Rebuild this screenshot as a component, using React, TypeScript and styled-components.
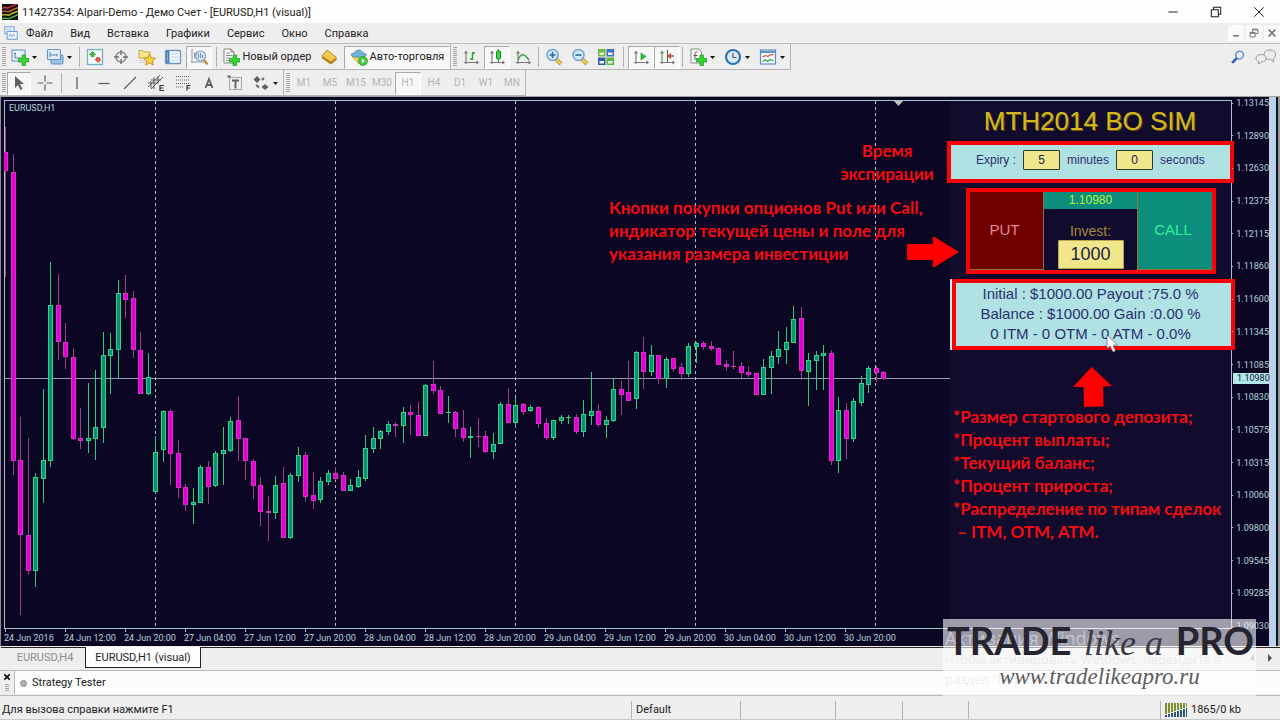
import React from "react";
import styled, { createGlobalStyle, css } from "styled-components";

const ui = `Roboto, "Open Sans", sans-serif`;
const arial = `"Liberation Sans", Arial, sans-serif`;

const Global = createGlobalStyle`
  * { box-sizing: border-box; }
  body { margin: 0; background: #eeeeee; }
  button, input { font: inherit; margin: 0; padding: 0; border: 0; border-radius: 0; background: none; color: inherit; }
  svg { display: block; flex: none; }
`;

/* ---------- data ---------- */

// kind, wick top, wick bottom, body top, body bottom
type Candle = ["u" | "d", number, number, number, number];

const candles: Candle[] = [
  ["d", 27, 177, 52, 71], ["d", 54, 375, 72, 361], ["d", 317, 515, 360, 435], ["d", 338, 474, 435, 471],
  ["u", 373, 487, 377, 471], ["u", 289, 403, 360, 379], ["u", 162, 367, 205, 361], ["d", 174, 260, 205, 242],
  ["d", 223, 269, 242, 257], ["d", 248, 340, 257, 339], ["d", 308, 349, 338, 341], ["u", 283, 353, 338, 341],
  ["u", 270, 360, 327, 339], ["u", 232, 343, 255, 328], ["u", 233, 294, 249, 256], ["u", 180, 278, 193, 250],
  ["d", 175, 218, 193, 200], ["d", 191, 258, 198, 250], ["d", 232, 294, 250, 294], ["u", 253, 295, 277, 294],
  ["u", 336, 393, 352, 392], ["u", 310, 362, 311, 350], ["d", 309, 385, 311, 354], ["d", 340, 398, 353, 388],
  ["d", 384, 411, 387, 405], ["u", 388, 424, 402, 405], ["u", 365, 403, 367, 403], ["d", 361, 404, 367, 387],
  ["u", 351, 387, 353, 386], ["u", 327, 385, 350, 354], ["u", 317, 352, 321, 351], ["d", 296, 361, 320, 339],
  ["d", 338, 380, 338, 361], ["d", 359, 399, 361, 386], ["d", 377, 426, 385, 412], ["d", 396, 441, 411, 413],
  ["u", 376, 419, 385, 413], ["d", 367, 438, 383, 438], ["u", 373, 439, 375, 438], ["u", 347, 382, 355, 376],
  ["d", 352, 402, 355, 397], ["d", 372, 409, 395, 401], ["u", 377, 403, 381, 400], ["u", 370, 385, 373, 382],
  ["d", 367, 380, 373, 379], ["d", 372, 391, 375, 391], ["u", 379, 391, 385, 391], ["u", 370, 388, 377, 387],
  ["u", 335, 381, 348, 379], ["u", 327, 353, 338, 349], ["u", 330, 349, 331, 339], ["u", 321, 335, 324, 332],
  ["d", 322, 337, 324, 326], ["u", 307, 343, 312, 326], ["d", 305, 335, 312, 315], ["d", 302, 336, 315, 336],
  ["u", 284, 336, 285, 336], ["d", 261, 294, 284, 291], ["d", 286, 314, 290, 314], ["u", 296, 323, 312, 313],
  ["d", 311, 337, 312, 329], ["d", 310, 342, 328, 338], ["u", 327, 358, 336, 338], ["d", 318, 347, 336, 337],
  ["d", 331, 353, 336, 352], ["u", 333, 359, 344, 352], ["u", 302, 344, 304, 344], ["d", 288, 323, 304, 323],
  ["u", 298, 328, 305, 323], ["d", 303, 315, 304, 312], ["u", 305, 312, 307, 311], ["d", 306, 328, 307, 324],
  ["d", 318, 340, 323, 338], ["u", 320, 340, 320, 338], ["u", 315, 324, 317, 321], ["u", 315, 324, 317, 318],
  ["d", 314, 334, 317, 332], ["u", 300, 337, 314, 332], ["u", 272, 325, 311, 316], ["d", 304, 327, 311, 325],
  ["u", 316, 338, 320, 325], ["u", 279, 322, 289, 321], ["d", 281, 315, 289, 295], ["d", 261, 301, 292, 301],
  ["u", 251, 309, 252, 299], ["d", 237, 289, 252, 272], ["u", 245, 276, 255, 272], ["d", 255, 284, 255, 279],
  ["u", 257, 288, 259, 279], ["d", 258, 272, 258, 269], ["d", 263, 280, 267, 274], ["u", 243, 277, 246, 274],
  ["u", 242, 263, 243, 247], ["d", 241, 250, 243, 247], ["d", 241, 251, 246, 249], ["d", 247, 265, 248, 265],
  ["d", 260, 271, 264, 267], ["d", 251, 269, 266, 267], ["d", 262, 278, 266, 273], ["d", 266, 277, 272, 275],
  ["d", 273, 295, 273, 295], ["u", 259, 295, 267, 295], ["u", 251, 294, 256, 268], ["u", 231, 264, 249, 257],
  ["u", 227, 264, 242, 250], ["u", 206, 243, 219, 243], ["d", 207, 278, 218, 271], ["u", 253, 306, 260, 272],
  ["u", 251, 290, 255, 261], ["u", 245, 290, 253, 256], ["d", 250, 365, 253, 361], ["u", 297, 373, 310, 361],
  ["d", 303, 359, 310, 339], ["u", 298, 342, 301, 339], ["u", 276, 306, 283, 303], ["u", 266, 293, 268, 285],
  ["d", 266, 282, 268, 273], ["d", 271, 280, 272, 279],
];

const prices = [
  "1.13145", "1.12890", "1.12630", "1.12375", "1.12115", "1.11860", "1.11600", "1.11345", "1.11085",
  "1.10830", "1.10575", "1.10315", "1.10060", "1.09800", "1.09545", "1.09285", "1.09030",
];

const times = [
  "24 Jun 2016", "24 Jun 12:00", "24 Jun 20:00", "27 Jun 04:00", "27 Jun 12:00", "27 Jun 20:00",
  "28 Jun 04:00", "28 Jun 12:00", "28 Jun 20:00", "29 Jun 04:00", "29 Jun 12:00", "29 Jun 20:00",
  "30 Jun 04:00", "30 Jun 12:00", "30 Jun 20:00",
];

const menus = ["Файл", "Вид", "Вставка", "Графики", "Сервис", "Окно", "Справка"];
const frames = ["M1", "M5", "M15", "M30", "H1", "H4", "D1", "W1", "MN"];

/* ---------- window chrome ---------- */

const Page = styled.div`
  position: relative;
  display: flex;
  flex-direction: column;
  min-height: 100vh;
  overflow: hidden;
  background: #eeeeee;
  color: #222;
  font: 11px/16px ${ui};
`;

const TitleBar = styled.header`
  display: flex;
  align-items: center;
  height: 23px;
  padding-left: 2px;
  background: #fdfdfb;
`;

const Title = styled.h1`
  flex: 1;
  margin: 0 0 0 4px;
  font: inherit;
  line-height: 18px;
  padding-top: 2px;
`;

const WindowButton = styled.button`
  display: flex;
  align-items: center;
  justify-content: center;
  width: 43px;
  height: 22px;
`;

const MenuBar = styled.nav`
  display: flex;
  align-items: center;
  height: 21px;
  padding-left: 4px;
  border-bottom: 1px solid #bcbcbc;
`;

const MenuItems = styled.div`
  display: flex;
  flex: 1;
  gap: 17px;
  padding-top: 1px;
  margin-left: 8px;
`;

const MdiButtons = styled.div`
  display: flex;
  gap: 2px;
`;

const MdiButton = styled.button`
  display: flex;
  align-items: center;
  justify-content: center;
  width: 16px;
  height: 16px;
  background: #fafafa;
`;

const ToolRow = styled.div<{ $last?: boolean }>`
  display: flex;
  align-items: center;
  height: ${(p) => (p.$last ? 27 : 26)}px;
  ${(p) => p.$last && css`border-bottom: 1px solid #a0a0a0;`}
`;

const ToolGroup = styled.div`
  display: flex;
  align-items: center;
  height: 26px;
  padding: 1px 0 0 2px;
  border: solid #b4b4b4;
  border-width: 0 1px 1px 0;
`;

const Spacer = styled.div`
  flex: 1;
`;

const Grip = styled.span`
  width: 4px;
  height: 20px;
  margin-right: 1px;
  background: repeating-linear-gradient(#a5a5a5 0 1px, #eee 1px 2px);
`;

const Sep = styled.span<{ $loose?: boolean }>`
  width: 1px;
  height: 20px;
  margin: 0 ${(p) => (p.$loose ? 4 : 2)}px;
  background: #b0b0b0;
`;

const ToolButton = styled.button<{ $pressed?: boolean; $wide?: number; $muted?: boolean }>`
  display: flex;
  align-items: center;
  justify-content: center;
  gap: 2px;
  width: ${(p) => p.$wide ?? 26}px;
  height: 23px;
  white-space: nowrap;
  ${(p) => p.$muted && css`color: #b4b4b4; font-size: 10px;`}
  ${(p) =>
    p.$pressed &&
    css`
      background: #f7f7f7;
      border: 1px solid #a8a8a8;
      border-right-color: #fff;
      border-bottom-color: #fff;
    `}
`;

const CornerTools = styled.div`
  display: flex;
  align-items: center;
  gap: 10px;
  padding-right: 4px;
`;

/* ---------- chart ---------- */

const Workspace = styled.main`
  position: relative;
  display: grid;
  flex: 1;
  grid-template-columns: minmax(0, 1fr) 37px 11px;
  grid-template-rows: 3px minmax(529px, 1fr) 17px;
  padding-left: 3px;
  background: #0a0624;
  border-left: 1px solid #8c8c90;
  color: #b4d4dc;
  font: 9px/12px ${ui};
`;

const Plot = styled.section`
  position: relative;
  display: flex;
  justify-content: flex-end;
  grid-area: 2 / 1;
  border: 1px solid #a9c0cc;
`;

const ChartCanvas = styled.svg`
  position: absolute;
  top: -1px;
  left: -1px;
  width: 100%;
  height: 100%;
`;

const Symbol = styled.span`
  position: absolute;
  top: 1px;
  left: 4px;
`;

const PriceAxis = styled.div`
  position: relative;
  display: flex;
  flex-direction: column;
  justify-content: space-between;
  grid-area: 1 / 2 / 4 / 3;
  padding-bottom: 14px;
`;

const Price = styled.span`
  display: flex;
  align-items: center;
  gap: 3px;
  &::before { content: ""; width: 2px; height: 1px; background: #a9c0cc; }
`;

const CurrentPrice = styled.span`
  position: absolute;
  top: 276px;
  left: 1px;
  right: 0;
  padding-left: 4px;
  background: #b0e8ea;
  color: #101030;
  line-height: 11px;
`;

const TimeAxis = styled.div`
  display: flex;
  grid-area: 3 / 1;
`;

const Time = styled.span`
  width: 60px;
  white-space: nowrap;
  &::before { content: ""; display: block; width: 1px; height: 3px; margin-left: 1px; background: #a9c0cc; }
`;

const EdgeStrip = styled.div`
  grid-area: 1 / 3 / 4 / 4;
  background: linear-gradient(90deg, #c4d0ea 0 5px, #a8daf0 5px 7px, #10141c 7px 9px, #9a9a9a 9px);
`;

/* ---------- simulator panel ---------- */

const SimPanel = styled.form`
  position: relative;
  display: flex;
  flex-direction: column;
  gap: 5px;
  width: 281px;
  margin: 0;
  background: #110b2d;
  font-family: ${arial};
`;

const SimTitle = styled.h2`
  margin: 0 0 -5px;
  padding-right: 1px;
  color: #d2b81e;
  text-shadow: 1px 1px 0 #6b5410;
  font: 26px/40px ${arial};
  text-align: center;
`;

const redFrame = css`
  border: 4px solid #fb0007;
`;

const Expiry = styled.div`
  ${redFrame}
  display: flex;
  align-items: center;
  gap: 7px;
  height: 42px;
  margin: 0 -3px;
  padding: 0 0 4px 25px;
  background: #b0e2e4;
  color: #28306e;
  font-size: 12px;
`;

const Field = styled.input<{ $big?: boolean }>`
  width: ${(p) => (p.$big ? 66 : 37)}px;
  height: ${(p) => (p.$big ? 29 : 20)}px;
  background: #f0e68c;
  border: 1px solid ${(p) => (p.$big ? "#b8a850" : "#2c3c28")};
  border-radius: 1px;
  color: #222244;
  font-size: ${(p) => (p.$big ? 18 : 12)}px;
  text-align: center;
`;

const Trade = styled.div`
  ${redFrame}
  display: grid;
  grid-template-columns: 74px 1fr 75px;
  height: 86px;
  width: 250px;
  margin-left: 16px;
`;

const SideButton = styled.button<{ $call?: boolean }>`
  padding: 0 4px 2px 0;
  background: ${(p) => (p.$call ? "#0d8d7c" : "#700000")};
  color: ${(p) => (p.$call ? "#2ef29a" : "#e08a9c")};
  border: solid #8c7a30;
  border-width: ${(p) => (p.$call ? "0 0 1px 1px" : "0 1px 1px 0")};
  font-size: 15px;
`;

const Middle = styled.div`
  display: flex;
  flex-direction: column;
  align-items: center;
`;

const Quote = styled.output`
  align-self: stretch;
  background: #0d8d7c;
  color: #b8f23c;
  font-size: 12px;
  line-height: 17px;
  text-align: center;
`;

const InvestLabel = styled.label`
  margin-top: 13px;
  color: #a88838;
  font-size: 14px;
  line-height: 18px;
`;

const Stats = styled.div`
  ${redFrame}
  height: 71px;
  margin: 0 -4px 0 2px;
  padding: 1px 6px 0 0;
  background: #b0e2e4;
  box-shadow: -2px 0 0 #c8eef0;
  color: #28306e;
  font-size: 15px;
  line-height: 20px;
  text-align: center;
  white-space: nowrap;
`;

/* ---------- annotations over the chart ---------- */

const Note = styled.p<{ $top: number; $right: number; $width: number; $center?: boolean }>`
  position: absolute;
  top: ${(p) => p.$top}px;
  right: ${(p) => p.$right}px;
  width: ${(p) => p.$width}px;
  margin: 0;
  color: #f50b10;
  font: bold 17px/23px Lato, sans-serif;
  text-align: ${(p) => (p.$center ? "center" : "left")};
  white-space: pre;
`;

const Pointer = styled.svg<{ $top: number; $right: number }>`
  position: absolute;
  top: ${(p) => p.$top}px;
  right: ${(p) => p.$right}px;
`;

/* ---------- bottom ---------- */

const Tabs = styled.div`
  display: flex;
  height: 25px;
  padding: 1px 0 2px 1px;
  border-bottom: 1px solid #b8b8b8;
`;

const Tab = styled.button<{ $active?: boolean }>`
  height: 21px;
  width: ${(p) => (p.$active ? 116 : 84)}px;
  padding: ${(p) => (p.$active ? "2px 0 0" : "0 0 0 4px")};
  border: solid #222;
  border-width: ${(p) => (p.$active ? "0 1px 1px" : "1px 0 0")};
  background: ${(p) => (p.$active ? "#fdfdfd" : "transparent")};
  color: ${(p) => (p.$active ? "#222" : "#8c8c8c")};
`;

const TabRest = styled.div`
  display: flex;
  flex: 1;
  align-items: center;
  justify-content: flex-end;
  height: 21px;
  padding-right: 6px;
  border-top: 1px solid #222;
`;

const Tester = styled.div`
  display: flex;
  height: 25px;
  border-bottom: 1px solid #b8b8b8;
`;

const TesterHandle = styled.div`
  display: flex;
  flex-direction: column;
  align-items: center;
  gap: 3px;
  width: 14px;
  padding-top: 2px;
`;

const SmallGrip = styled.span`
  width: 4px;
  height: 8px;
  background: repeating-linear-gradient(#a5a5a5 0 1px, #eee 1px 2px);
`;

const TesterTitle = styled.div`
  display: flex;
  flex: 1;
  align-items: center;
  gap: 5px;
  height: 23px;
  padding: 1px 0 0 5px;
  border-left: 1px solid #b8b8b8;
  background: #fcfcfc;
`;

const Dot = styled.span`
  width: 7px;
  height: 7px;
  border: 1px solid #8c8c8c;
  border-radius: 50%;
  background: #b0b0b0;
`;

const StatusBar = styled.footer`
  display: flex;
  align-items: center;
  height: 24px;
  padding: 5px 0 0 2px;
  border-bottom: 1px solid #c8c8c8;
`;

const StatusCell = styled.div<{ $width: number }>`
  display: flex;
  align-items: center;
  gap: 4px;
  width: ${(p) => p.$width}px;
  height: 18px;
  padding-left: 4px;
  border-left: 1px solid #b4b4b4;
`;

/* ---------- watermark ---------- */

const Watermark = styled.aside`
  position: absolute;
  right: 24px;
  bottom: 24px;
  width: 313px;
  height: 77px;
  background: rgba(255, 255, 255, 0.6);
  overflow: hidden;
  white-space: nowrap;
`;

const Ghost = styled.div`
  position: absolute;
  inset: 8px 0 auto 2px;
  color: rgba(225, 225, 235, 0.6);
  font: 13px/20px "Open Sans", sans-serif;
`;

const GhostHead = styled.div`
  font-size: 18px;
  line-height: 22px;
`;

const Brand = styled.div`
  position: relative;
  display: flex;
  align-items: baseline;
  justify-content: space-between;
  height: 43px;
  padding: 0 2px 0 4px;
  color: #26242f;
  font: bold 38px/42px Lato, sans-serif;
`;

const BrandScript = styled.em`
  color: #3c3a44;
  font: italic 36px/40px "Liberation Serif", serif;
`;

const Site = styled.a`
  position: relative;
  display: block;
  color: #5c5c5c;
  font: italic 23px/30px "Liberation Serif", serif;
  text-align: center;
  text-decoration: none;
`;

/* ---------- icons ---------- */

const Svg = ({ children, s = 18 }: { children: React.ReactNode; s?: number }) => (
  <svg width={s} height={s} viewBox="0 0 18 18" fill="none" aria-hidden="true">{children}</svg>
);

const Caret = () => (
  <svg width="7" height="5" viewBox="0 0 7 5" aria-hidden="true"><path d="M1 1h5L3.500 4z" fill="#111" /></svg>
);

const Plus = () => (
  <path d="M11 7h3.500v3.500H18V14h-3.500v3.500H11V14H7.500v-3.500H11z" fill="#34d534" stroke="#2aa02a" strokeWidth=".8" />
);

const LogoIcon = () => (
  <Svg s={16}>
    <rect width="18" height="18" fill="#111" />
    <path d="M0 5c3-3 5 1 8-1s5-2 9-4" stroke="#d33" strokeWidth="1.500" />
    <path d="M0 9c3-3 6 1 9-1s5-2 9-4" stroke="#e86a2a" strokeWidth="1.500" />
    <path d="M0 13c3-3 6 1 9-1s5-2 9-4" stroke="#c9d32c" strokeWidth="1.500" />
    <path d="M0 17c3-3 6 1 9-1s5-2 9-4" stroke="#4cc03a" strokeWidth="1.500" />
  </Svg>
);
const DocIcon = () => (
  <Svg s={14}>
    <rect x="1" y="1" width="12" height="9" fill="#e8f2fc" stroke="#7da7d8" strokeWidth="1.300" />
    <path d="M3 4h3M8 3v4" stroke="#7da7d8" />
    <rect x="4" y="7" width="13" height="10" fill="#f4f9ff" stroke="#6c9ad4" strokeWidth="1.300" />
    <path d="M6 14l2-4 2 4 2-4 2 4" stroke="#6c9ad4" />
  </Svg>
);
const NewChart = () => (
  <Svg>
    <rect x="1" y="2" width="13" height="11" fill="#e9f2fb" stroke="#6f9cc4" strokeWidth="1.200" />
    <path d="M4 5v5h6M4 5l-1 1M4 5l1 1" stroke="#4d6f90" strokeWidth=".9" />
    <Plus />
  </Svg>
);
const Profiles = () => (
  <Svg>
    <rect x="5" y="7" width="12" height="9" rx="1" fill="#9fc1e4" stroke="#6490c0" />
    <rect x="1.500" y="1.500" width="13" height="10" rx="1" fill="#e3eefa" stroke="#6a96c6" strokeWidth="1.200" />
    <path d="M4 4v5M4 7h7M11 5.500v3" stroke="#5580ae" />
  </Svg>
);
const MarketWatch = () => (
  <Svg>
    <rect x="1.500" y="1.500" width="15" height="15" fill="#f4fbfb" stroke="#74b0c2" strokeWidth="1.300" />
    <path d="M6.500 3.500l3 3h-1.500v2h-3v-2H3.500z" fill="#3bc23b" stroke="#1c8a1c" strokeWidth=".6" />
    <path d="M12 14.500l3-3h-1.500v-2h-3v2H9z" fill="#ee5a3a" stroke="#b03020" strokeWidth=".6" />
  </Svg>
);
const Target = () => (
  <Svg>
    <circle cx="9" cy="9" r="5" stroke="#8a8a8a" strokeWidth="1.500" />
    <path d="M9 2v5M9 11v5M2 9h5M11 9h5" stroke="#6c6c6c" strokeWidth="1.300" />
  </Svg>
);
const Favorites = () => (
  <Svg>
    <path d="M1 2.500h4l1 1.500h6v6H1z" fill="#f5e88c" stroke="#c2a93a" />
    <path d="M3 12v4M6 12v3" stroke="#999" strokeDasharray="1 1" />
    <path d="M11.500 6l1.800 3.800 4.200.4-3.100 2.800.9 4-3.800-2-3.700 2 .8-4L5.500 10.200l4.200-.4z" fill="#fbd63f" stroke="#b78b16" strokeWidth=".9" />
  </Svg>
);
const DataWindow = () => (
  <Svg>
    <rect x="1.500" y="2.500" width="15" height="13" rx="1" fill="#f5f9fe" stroke="#6a94c0" strokeWidth="1.300" />
    <path d="M2 3h3.500v12H2z" fill="#4b80bb" />
    <path d="M7.500 6h7.500M7.500 9h7.500M7.500 12h7.500" stroke="#b9d0e8" />
    <path d="M3.500 5v8" stroke="#d9e8f8" strokeDasharray="1 1.500" />
  </Svg>
);
const TesterIcon = () => (
  <Svg>
    <path d="M2 1v14M1 14h13M5 4v7M8 3v7" stroke="#879bb4" />
    <rect x="4" y="5" width="2" height="4" fill="#7ba0c8" />
    <circle cx="10.500" cy="8" r="5" fill="#cfe3f6" fillOpacity=".8" stroke="#8ba2be" strokeWidth="1.200" />
    <path d="M8.500 6v4M10.500 5v5M12.500 7v3" stroke="#6c8fb5" />
    <path d="M14 12l3.500 4.500" stroke="#c78c2c" strokeWidth="2.200" />
  </Svg>
);
const NewOrder = () => (
  <Svg>
    <path d="M2 1h7l3 3v11H2z" fill="#fafafa" stroke="#8a8a8a" />
    <path d="M9 1v3h3" stroke="#7d7d7d" />
    <path d="M4 5h4M4 7.500h6M4 10h4M4 12.500h3" stroke="#8f8f8f" />
    <Plus />
  </Svg>
);
const Gold = () => (
  <Svg>
    <path d="M7 2l9.500 7.500v2.500L11 16.500 2 10.500V8z" fill="#b8821a" />
    <path d="M7 2l9.500 7.500L11 14 2 8z" fill="#f2c94f" stroke="#b5831c" strokeWidth=".8" />
  </Svg>
);
const AutoTrade = () => (
  <Svg>
    <path d="M2 9l7 7 6-5-1-4H3z" fill="#f2d552" stroke="#bfa02a" strokeWidth=".7" />
    <path d="M1 7c0-2 3-1 4-3s6-3 7 0c1 1.500 4 1 4.500 3-2 3-13 3-15.500 0z" fill="#6fb4dc" stroke="#3a82b2" strokeWidth=".8" />
    <circle cx="13" cy="13" r="4.500" fill="#3ecb3c" stroke="#1c961c" strokeWidth=".6" />
    <path d="M11.700 10.700v4.600l3.600-2.300z" fill="#fff" />
  </Svg>
);
const Axes = ({ children }: { children?: React.ReactNode }) => (
  <Svg>
    <path d="M4 4v12M2 14.500h14M2.500 5.500L4 3.500l1.500 2M14.500 13l1.700 1.500-1.700 1.500" stroke="#7a7a7a" strokeWidth="1.100" />
    {children}
  </Svg>
);
const ZoomIcon = ({ plus }: { plus?: boolean }) => (
  <Svg>
    <path d="M11 11l5 5" stroke="#b89a4c" strokeWidth="4" />
    <path d="M11.300 11.300l4.400 4.400" stroke="#efcc4a" strokeWidth="2.600" />
    <circle cx="7.500" cy="7" r="5.500" fill="#cfe8fa" stroke="#6ca2ce" strokeWidth="1.400" />
    <path d={plus ? "M4.500 7h6M7.500 4v6" : "M4.500 7h6"} stroke="#2b66a3" strokeWidth="1.600" />
  </Svg>
);
const Tiles = () => (
  <Svg>
    <rect x="1" y="1" width="7.500" height="7.500" fill="#6cbf3c" /><rect x="9.500" y="1" width="7.500" height="7.500" fill="#3c70c0" />
    <rect x="1" y="9.500" width="7.500" height="7.500" fill="#2f5cae" /><rect x="9.500" y="9.500" width="7.500" height="7.500" fill="#5eb53c" />
    <path d="M2.500 4.500h4.500v2.500H2.500zM11 4.500h4.500v2.500H11zM2.500 13h4.500v2.500H2.500zM11 13h4.500v2.500H11z" fill="#eef6ee" />
  </Svg>
);
const Indicators = () => (
  <Svg>
    <path d="M2 1h8l2.500 3v11H2z" fill="#fafafa" stroke="#8a8a8a" />
    <path d="M8.500 4C6.500 3 6 5 6 7v5M4.500 7.500h4" stroke="#555" />
    <Plus />
  </Svg>
);
const Clock = () => (
  <Svg>
    <circle cx="9" cy="9" r="7" fill="#dcebf8" stroke="#2f72b5" strokeWidth="2.200" />
    <path d="M9 5v4.500h3.500" stroke="#555" strokeWidth="1.200" />
  </Svg>
);
const Templates = () => (
  <Svg>
    <rect x="1.500" y="2" width="15" height="14" fill="#f8fbff" stroke="#5c8cbc" strokeWidth="1.200" />
    <path d="M2 3h14v2H2z" fill="#5e93c8" />
    <path d="M3.500 9l3-1.500 2.500 1 3-2 2.500.5" stroke="#b34a3a" strokeWidth="1.100" />
    <path d="M3.500 13.500l3-1.500 2 1.500 3-2 3 1.500" stroke="#36a04a" strokeWidth="1.100" />
  </Svg>
);
const SearchIcon = () => (
  <Svg s={14}>
    <circle cx="11" cy="6.500" r="5" fill="#e8f0ff" stroke="#6a8ed4" strokeWidth="2" />
    <path d="M7.500 10.500L1.500 16.500" stroke="#3a5cc0" strokeWidth="3.400" />
  </Svg>
);
const Chat = () => (
  <svg width="21" height="16" viewBox="0 0 21 16" fill="#ececec" stroke="#9a9a9a" aria-hidden="true">
    <path d="M9 6c0-3 2-5 6-5s5.500 2 5.500 4.500S19 9.500 18 10l.5 3-3-2.500C11 10.500 9 9 9 6z" />
    <path d="M1 9.500C1 7 3 5.500 6 5.500s5 1.500 5 4-2 3.500-4.500 3.500L3.500 15v-2.500C2 12 1 11 1 9.500z" />
  </svg>
);

const gray = "#606060";

const Signal = () => (
  <svg width="22" height="14" viewBox="0 0 22 14" aria-hidden="true">
    {[0, 1, 2, 3, 4, 5, 6, 7].map((i) => (
      <g key={i}>
        <rect x={i * 3} y="0" width="2" height={11 - i} fill="#7b8f2c" />
        <rect x={i * 3} y={12 - i} width="2" height={2 + i} fill="#2c5870" />
      </g>
    ))}
  </svg>
);

/* ---------- candlesticks ---------- */

const Candles = () => (
  <ChartCanvas aria-label="EURUSD, H1">
    <path d="M0 278.500H946" stroke="#9a9ab2" />
    {[151, 331, 511, 691, 871].map((x) => (
      <path key={x} d={`M${x + 0.5} 1V528`} stroke="#b9b9cc" strokeDasharray="3 3" />
    ))}
    <path d="M890 1h9l-4.500 5z" fill="#c4c4c8" />
    {candles.map(([kind, high, low, top, bottom], i) => {
      const x = Math.round(1 + i * 7.507);
      const up = kind === "u";
      return (
        <g key={i}>
          <rect x={x} y={high} width="1" height={low - high} fill={up ? "#2ccb78" : "#a03c90"} />
          {bottom - top > 2 ? (
            <rect x={x - 1.5} y={top + 0.5} width="4" height={bottom - top - 1}
              fill={up ? "#0b8f76" : "#e400d8"} stroke={up ? "#2cd884" : "#dc2cc8"} />
          ) : (
            <rect x={x - 2} y={top} width="5" height={bottom - top} fill={up ? "#2cd884" : "#c83ab0"} />
          )}
        </g>
      );
    })}
  </ChartCanvas>
);

export default function App() {
  return (
    <Page>
      <Global />
      <TitleBar>
        <LogoIcon />
        <Title>11427354: Alpari-Demo - Демо Счет - [EURUSD,H1 (visual)]</Title>
        <WindowButton aria-label="Свернуть"><Svg s={12}><path d="M2 9h14" stroke="#222" strokeWidth="1.500" /></Svg></WindowButton>
        <WindowButton aria-label="Восстановить">
          <Svg s={12}><path d="M2 5.500h10.500V16H2zM5.500 5V2H16v10.500h-3" stroke="#222" strokeWidth="1.600" /></Svg>
        </WindowButton>
        <WindowButton aria-label="Закрыть"><Svg s={12}><path d="M2 2l14 14M16 2L2 16" stroke="#222" strokeWidth="1.500" /></Svg></WindowButton>
      </TitleBar>

      <MenuBar>
        <DocIcon />
        <MenuItems>{menus.map((m) => <button key={m}>{m}</button>)}</MenuItems>
        <MdiButtons>
          <MdiButton aria-label="Свернуть окно"><Svg s={10}><path d="M4 14h10" stroke="#777" strokeWidth="3" /></Svg></MdiButton>
          <MdiButton aria-label="Восстановить окно"><Svg s={10}><path d="M2 8h9v8H2zM2 9.500h9M6 7V2h10v8h-4M6 3.500h10" stroke="#777" strokeWidth="1.800" /></Svg></MdiButton>
          <MdiButton aria-label="Закрыть окно"><Svg s={10}><path d="M3 3l12 12M15 3L3 15" stroke="#777" strokeWidth="3" /></Svg></MdiButton>
        </MdiButtons>
      </MenuBar>

      <ToolRow>
        <ToolGroup>
          <Grip />
          <ToolButton $wide={35} aria-label="Новый график"><NewChart /><Caret /></ToolButton>
          <ToolButton $wide={35} aria-label="Профили"><Profiles /><Caret /></ToolButton>
          <Sep />
          <ToolButton aria-label="Обзор рынка"><MarketWatch /></ToolButton>
          <ToolButton aria-label="Навигация"><Target /></ToolButton>
          <ToolButton aria-label="Избранное"><Favorites /></ToolButton>
          <ToolButton aria-label="Окно данных"><DataWindow /></ToolButton>
          <ToolButton $pressed aria-label="Тестер стратегий"><TesterIcon /></ToolButton>
          <Sep $loose />
          <ToolButton $wide={92}><NewOrder />Новый ордер</ToolButton>
          <ToolButton $wide={31} aria-label="MetaEditor"><Gold /></ToolButton>
          <ToolButton $wide={106} $pressed><AutoTrade />Авто-торговля</ToolButton>
        </ToolGroup>
        <ToolGroup>
          <Grip />
          <ToolButton aria-label="Бары"><Axes><path d="M10.500 4v8M8 11h2.500M10.500 5H13" stroke="#2a9a3c" strokeWidth="1.300" /></Axes></ToolButton>
          <ToolButton $pressed aria-label="Свечи"><Axes><path d="M10.500 1v13" stroke="#1f8a2a" /><rect x="8.500" y="3" width="4" height="8" rx="1" fill="#3ed83e" stroke="#1f8a2a" /></Axes></ToolButton>
          <ToolButton aria-label="Линия"><Axes><path d="M4 12c3-7 6-7 11 0" stroke="#3aa04a" strokeWidth="1.300" /></Axes></ToolButton>
          <Sep />
          <ToolButton aria-label="Приблизить"><ZoomIcon plus /></ToolButton>
          <ToolButton aria-label="Отдалить"><ZoomIcon /></ToolButton>
          <ToolButton aria-label="Упорядочить"><Tiles /></ToolButton>
          <Sep $loose />
          <ToolButton $pressed aria-label="Автопрокрутка"><Axes><path d="M9 5v7l5-3.500z" fill="#33c044" stroke="#1f8a2a" strokeWidth=".6" /></Axes></ToolButton>
          <ToolButton $pressed aria-label="Сдвиг графика"><Axes><path d="M9.500 2v12" stroke="#555" /><path d="M16 8h-5M13 5.500L10.500 8l2.500 2.500" stroke="#b8442c" strokeWidth="1.300" /></Axes></ToolButton>
          <Sep />
          <ToolButton $wide={35} aria-label="Индикаторы"><Indicators /><Caret /></ToolButton>
          <ToolButton $wide={35} aria-label="Периоды"><Clock /><Caret /></ToolButton>
          <ToolButton $wide={35} aria-label="Шаблоны"><Templates /><Caret /></ToolButton>
        </ToolGroup>
        <Spacer />
        <CornerTools>
          <button aria-label="Поиск"><SearchIcon /></button>
          <button aria-label="Чат"><Chat /></button>
        </CornerTools>
      </ToolRow>

      <ToolRow $last>
        <ToolGroup>
          <Grip />
          <ToolButton $pressed $wide={24} aria-label="Курсор"><Svg><path d="M5 2v12l3-3 2.500 5 2-1-2.500-5h4z" fill={gray} /></Svg></ToolButton>
          <ToolButton $wide={28} aria-label="Перекрестие"><Svg><path d="M9 1.500v6M9 10.500v6M1.500 9h6M10.500 9h6" stroke={gray} strokeWidth="1.200" /></Svg></ToolButton>
          <Sep />
          <ToolButton aria-label="Вертикальная линия"><Svg><path d="M9 3v12" stroke={gray} strokeWidth="1.300" /></Svg></ToolButton>
          <ToolButton $wide={27} aria-label="Горизонтальная линия"><Svg><path d="M3.500 9.500h11" stroke={gray} strokeWidth="1.300" /></Svg></ToolButton>
          <ToolButton aria-label="Трендовая линия"><Svg><path d="M3 15L15 3" stroke={gray} strokeWidth="1.300" /></Svg></ToolButton>
          <ToolButton aria-label="Канал"><Svg><path d="M1 13L13 1M4 15L16 3M1 9h9M4 6h10M7 3v12M11 2v8M4 7v7" stroke={gray} /><path d="M17 11.500h-4v5h4M13 14h3.500" stroke="#333" strokeWidth="1.200" /></Svg></ToolButton>
          <ToolButton $wide={27} aria-label="Фибоначчи"><Svg><path d="M2 2.500h14M2 6h14M2 9.500h14M2 13h8" stroke={gray} strokeDasharray="1 1" /><path d="M16.500 11.500h-3.500v5M13 14h3" stroke="#333" strokeWidth="1.200" /></Svg></ToolButton>
          <ToolButton aria-label="Текст"><Svg><path d="M5.500 14L9 5l3.500 9M6.500 11h5" stroke={gray} strokeWidth="1.800" /></Svg></ToolButton>
          <ToolButton aria-label="Метка"><Svg><rect x="3.500" y="3.500" width="12" height="12" stroke={gray} strokeDasharray="1 1" /><path d="M6 6.500h7M9.500 6.500v8" stroke={gray} strokeWidth="1.800" /><path d="M1.500 1.500h3v2h-3z" fill={gray} /></Svg></ToolButton>
          <ToolButton $wide={35} aria-label="Стрелки"><Svg><path d="M5 2l3.500 3.500L5 9 1.500 5.500zM13 10l3.500 3-3.500 3-3.500-3z" fill={gray} /><path d="M4 11l3 2.500M10 6l2-2" stroke={gray} strokeWidth="1.800" /></Svg><Caret /></ToolButton>
        </ToolGroup>
        <ToolGroup>
          <Grip />
          {frames.map((f) => <ToolButton key={f} $muted $pressed={f === "H1"}>{f}</ToolButton>)}
        </ToolGroup>
      </ToolRow>

      <Workspace>
        <Plot>
          <Candles />
          <Symbol>EURUSD,H1</Symbol>
          <SimPanel onSubmit={(e) => e.preventDefault()}>
            <SimTitle>MTH2014 BO SIM</SimTitle>
            <Expiry>
              <span>Expiry :</span>
              <Field id="minutes" defaultValue="5" />
              <label htmlFor="minutes">minutes</label>
              <Field id="seconds" defaultValue="0" />
              <label htmlFor="seconds">seconds</label>
            </Expiry>
            <Trade>
              <SideButton type="button">PUT</SideButton>
              <Middle>
                <Quote>1.10980</Quote>
                <InvestLabel htmlFor="invest">Invest:</InvestLabel>
                <Field id="invest" $big defaultValue="1000" />
              </Middle>
              <SideButton type="button" $call>CALL</SideButton>
            </Trade>
            <Stats>
              <div>Initial : $1000.00 Payout :75.0 %</div>
              <div>Balance : $1000.00 Gain :0.00 %</div>
              <div>0 ITM - 0 OTM - 0 ATM - 0.0%</div>
            </Stats>
          </SimPanel>
        </Plot>
        <PriceAxis>
          {prices.map((p) => <Price key={p}>{p}</Price>)}
          <CurrentPrice>1.10980</CurrentPrice>
        </PriceAxis>
        <TimeAxis>{times.map((t) => <Time key={t}>{t}</Time>)}</TimeAxis>
        <EdgeStrip />

        <Note $top={42} $right={343} $width={100} $center>{"Время\nэкспирации"}</Note>
        <Note $top={99} $right={331} $width={340}>
          {"Кнопки покупки опционов Put или Call,\nиндикатор текущей цены и поле для\nуказания размера инвестиции"}
        </Note>
        <Note $top={308} $right={27} $width={300}>
          {"*Размер стартового депозита;\n*Процент выплаты;\n*Текущий баланс;\n*Процент прироста;\n*Распределение по типам сделок\n – ITM, OTM, ATM."}
        </Note>
        <Pointer $top={139} $right={321} width="52" height="32" aria-hidden="true"><path d="M0 8h26V0l26 16-26 16v-8H0z" fill="#fe0000" /></Pointer>
        <Pointer $top={270} $right={168} width="39" height="40" aria-hidden="true"><path d="M18.500 0L39 19l-9 .5.500 20-19.500.5-.5-20H0z" fill="#fe0000" /></Pointer>
        <Pointer $top={238} $right={162} width="12" height="20" aria-hidden="true"><path d="M1 0v14l3-3 3 6 2.500-1-2.500-6h4.500z" fill="#fff" stroke="#446" strokeWidth=".6" /></Pointer>
      </Workspace>

      <Tabs>
        <Tab>EURUSD,H4</Tab>
        <Tab $active>EURUSD,H1 (visual)</Tab>
        <TabRest>
          <svg width="24" height="8" viewBox="0 0 24 8" aria-hidden="true"><path d="M4 0v8L0 4z" fill="#999" /><path d="M18 0v8l4-4z" fill="#555" /></svg>
        </TabRest>
      </Tabs>

      <Tester>
        <TesterHandle>
          <Svg s={8}><path d="M3 3l12 12M15 3L3 15" stroke="#111" strokeWidth="4" /></Svg>
          <SmallGrip />
        </TesterHandle>
        <TesterTitle><Dot />Strategy Tester</TesterTitle>
      </Tester>

      <StatusBar>
        <Spacer>Для вызова справки нажмите F1</Spacer>
        <StatusCell $width={109}>Default</StatusCell>
        <StatusCell $width={95} />
        <StatusCell $width={67} />
        <StatusCell $width={66} />
        <StatusCell $width={192} />
        <StatusCell $width={120}><Signal />1865/0 kb</StatusCell>
      </StatusBar>

      <Watermark>
        <Ghost>
          <GhostHead>Активация Windows</GhostHead>
          <div>Чтобы активировать Windows, перейдите в</div>
          <div>раздел "Параметры".</div>
        </Ghost>
        <Brand><span>TRADE</span><BrandScript>like a</BrandScript><span>PRO</span></Brand>
        <Site href="#site">www.tradelikeapro.ru</Site>
      </Watermark>
    </Page>
  );
}
